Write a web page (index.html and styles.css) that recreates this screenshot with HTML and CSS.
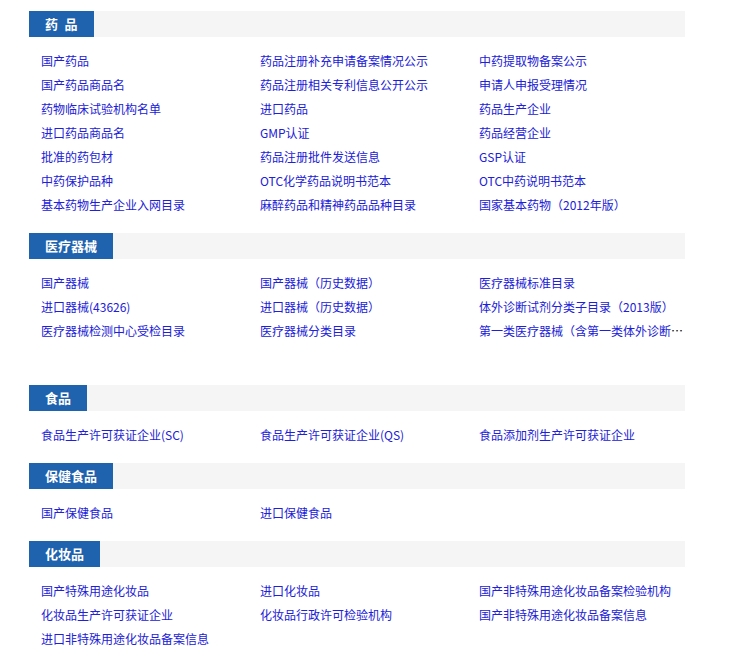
FILE: index.html
```html
<!DOCTYPE html>
<html lang="zh-CN">
<head>
    <meta charset="UTF-8">
    <title>数据查询</title>
    <link rel="stylesheet" href="styles.css">
</head>
<body>
    <div class="wrap">
        <div class="cat-head"><span class="cat-tab">药&ensp;品</span></div>
        <ul class="cat-list">
            <li><a href="#">国产药品</a></li>
            <li><a href="#">药品注册补充申请备案情况公示</a></li>
            <li><a href="#">中药提取物备案公示</a></li>
            <li><a href="#">国产药品商品名</a></li>
            <li><a href="#">药品注册相关专利信息公开公示</a></li>
            <li><a href="#">申请人申报受理情况</a></li>
            <li><a href="#">药物临床试验机构名单</a></li>
            <li><a href="#">进口药品</a></li>
            <li><a href="#">药品生产企业</a></li>
            <li><a href="#">进口药品商品名</a></li>
            <li><a href="#">GMP认证</a></li>
            <li><a href="#">药品经营企业</a></li>
            <li><a href="#">批准的药包材</a></li>
            <li><a href="#">药品注册批件发送信息</a></li>
            <li><a href="#">GSP认证</a></li>
            <li><a href="#">中药保护品种</a></li>
            <li><a href="#">OTC化学药品说明书范本</a></li>
            <li><a href="#">OTC中药说明书范本</a></li>
            <li><a href="#">基本药物生产企业入网目录</a></li>
            <li><a href="#">麻醉药品和精神药品品种目录</a></li>
            <li><a href="#">国家基本药物（2012年版）</a></li>
        </ul>

        <div class="cat-head"><span class="cat-tab">医疗器械</span></div>
        <ul class="cat-list cat-list-tall">
            <li><a href="#">国产器械</a></li>
            <li><a href="#">国产器械（历史数据）</a></li>
            <li><a href="#">医疗器械标准目录</a></li>
            <li><a href="#">进口器械(43626)</a></li>
            <li><a href="#">进口器械（历史数据）</a></li>
            <li><a href="#">体外诊断试剂分类子目录（2013版）</a></li>
            <li><a href="#">医疗器械检测中心受检目录</a></li>
            <li><a href="#">医疗器械分类目录</a></li>
            <li><a href="#">第一类医疗器械（含第一类体外诊断试剂）备案信息</a></li>
        </ul>

        <div class="cat-head"><span class="cat-tab">食品</span></div>
        <ul class="cat-list">
            <li><a href="#">食品生产许可获证企业(SC)</a></li>
            <li><a href="#">食品生产许可获证企业(QS)</a></li>
            <li><a href="#">食品添加剂生产许可获证企业</a></li>
        </ul>

        <div class="cat-head"><span class="cat-tab">保健食品</span></div>
        <ul class="cat-list">
            <li><a href="#">国产保健食品</a></li>
            <li><a href="#">进口保健食品</a></li>
        </ul>

        <div class="cat-head"><span class="cat-tab">化妆品</span></div>
        <ul class="cat-list">
            <li><a href="#">国产特殊用途化妆品</a></li>
            <li><a href="#">进口化妆品</a></li>
            <li><a href="#">国产非特殊用途化妆品备案检验机构</a></li>
            <li><a href="#">化妆品生产许可获证企业</a></li>
            <li><a href="#">化妆品行政许可检验机构</a></li>
            <li><a href="#">国产非特殊用途化妆品备案信息</a></li>
            <li><a href="#">进口非特殊用途化妆品备案信息</a></li>
        </ul>
    </div>
</body>
</html>
```

FILE: styles.css
```css
body {
    margin: 0;
    padding: 11px 0 0 29px;
    background: #fff;
    font-family: "Noto Sans CJK SC", "Noto Sans", sans-serif;
    font-size: 12px;
}

.wrap {
    width: 656px;
}

.cat-head {
    height: 26px;
    background: #f5f5f5;
    display: flex;
}

.cat-tab {
    display: block;
    height: 26px;
    line-height: 25px;
    padding: 0 16px;
    background: #1f62ae;
    color: #fff;
    font-size: 13px;
    font-weight: bold;
}

.cat-list {
    list-style: none;
    margin: 12px 0 16px;
    padding: 0 0 0 12px;
    display: grid;
    grid-template-columns: 219px 219px 206px;
}

.cat-list-tall {
    margin-bottom: 42px;
}

.cat-list li {
    height: 24px;
    line-height: 23px;
    white-space: nowrap;
    overflow: hidden;
    text-overflow: ellipsis;
}

.cat-list a {
    color: #2020d8;
    text-decoration: none;
}
```
